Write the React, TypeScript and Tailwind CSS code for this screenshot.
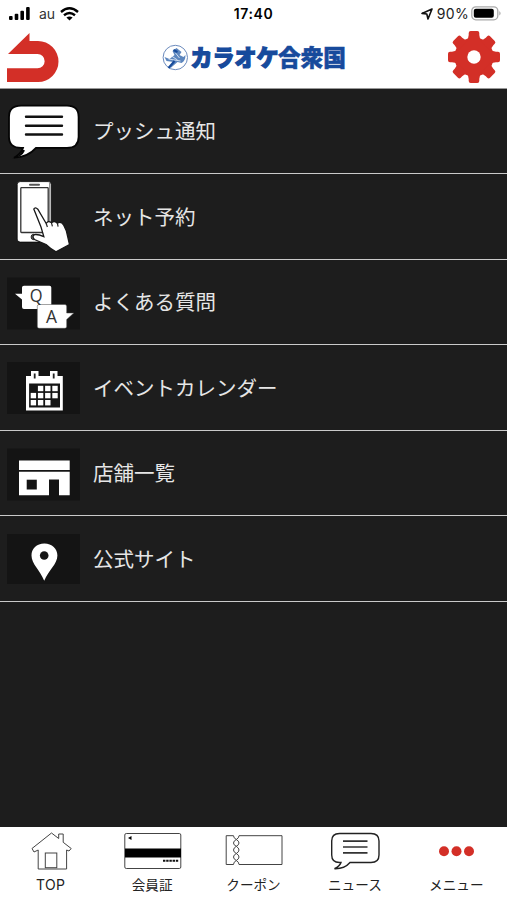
import type { ReactNode } from "react";

const jp = "font-['Liberation_Sans','Noto_Sans_CJK_JP',sans-serif]";

function BubbleIcon() {
  return (
    <>
      <path
        d="M21 105.2H67Q78.6 105.2 78.6 116.5V136.5Q78.6 147.4 67 147.4H36Q28 156.6 14 157.2Q21 153.6 23 147.4H21Q9 147.4 9 136.5V116.5Q9 105.2 21 105.2Z"
        fill="#fff" stroke="#050505" strokeWidth="1.8"
      />
      <path d="M12 158Q20 156 22.5 149L25 150Q22 157 12 158Z" fill="#050505" />
      <path d="M26 116.3H62M26 125.2H62M26 134H62" stroke="#111" strokeWidth="2.4" strokeLinecap="round" />
    </>
  );
}

function PhoneIcon() {
  return (
    <>
      <rect x="17.2" y="181.6" width="34" height="60.5" rx="3" fill="#fff" stroke="#050505" strokeWidth=".8" />
      <path d="M49.6 183V240" stroke="#777" strokeWidth=".9" />
      <rect x="20.8" y="187.7" width="27.4" height="44.8" rx=".7" fill="#fff" stroke="#333" strokeWidth="1.3" />
      <path d="M30 184.8H39" stroke="#555" strokeWidth="2" strokeLinecap="round" />
      <circle cx="33.8" cy="237" r="2.7" fill="#777" stroke="#222" />
      <path
        d="M33.8 209Q35.2 206.5 37.8 209.2L46.2 223.5Q48 220 51.5 222.8Q54.5 220 57.4 223.2Q61 221 63.5 224.8L66.4 231L69.5 244.5L56 251.8Q50 248.5 46 244.5L34.5 239.5Q31.5 236.5 34.5 234.6Q38 234 43.8 236.6L41 227Z"
        fill="#fff" stroke="#181818" strokeWidth="1.3"
      />
      <path d="M46.2 223.5L47.4 227M51.5 222.8L52.4 226.3M57.4 223.2L58.1 226.7" stroke="#222" strokeWidth="1.2" />
    </>
  );
}

function FaqIcon() {
  return (
    <>
      <rect x="7" y="277" width="73" height="52" fill="#141414" />
      <path d="M15 293.3H22V287Q22 285.3 24 285.3H49.5Q51.3 285.3 51.3 287V308.5H24Q22 308.5 22 306.5V299Z" fill="#fff" />
      <path d="M39 304H65Q66.7 304 66.7 306V312.5H73.8L66.7 319V326Q66.7 327.8 65 327.8H39Q37.3 327.8 37.3 326V306Q37.3 304 39 304Z" fill="#fff" stroke="#444" strokeWidth=".5" />
      <text x="29.8" y="301.6" textLength="12.8" lengthAdjust="spacingAndGlyphs" fontSize="19" fill="#333" className="font-['Open_Sans']">Q</text>
      <text x="46" y="322" textLength="11" lengthAdjust="spacingAndGlyphs" fontSize="19" fill="#333" className="font-['Open_Sans']">A</text>
    </>
  );
}

const DAYS = [
  [40.6, 388.5], [47.8, 388.5], [55, 388.5],
  [33.4, 395.6], [40.6, 395.6], [47.8, 395.6], [55, 395.6],
  [33.4, 402.7], [40.6, 402.7], [47.8, 402.7],
];

function CalendarIcon() {
  return (
    <>
      <rect x="7" y="362" width="73" height="52" fill="#141414" />
      <path d="M26 376H31V371H38.5V376H50V371H57.5V376H62.8V410.4H26Z" fill="#fff" />
      <path d="M29.1 383.5H60V407.5H29.1Z" fill="#151515" />
      <path d="M34.7 373.4V378.5M53.7 373.4V378.5" stroke="#222" strokeWidth="1.8" />
      {DAYS.map(([x, y]) => (
        <rect key={`${x}-${y}`} x={x - 2.7} y={y - 2.7} width="5.4" height="5.4" fill="#fff" />
      ))}
    </>
  );
}

function StoreIcon() {
  return (
    <>
      <rect x="7" y="448" width="73" height="52" fill="#141414" />
      <path d="M19 460H69.7V469.4H19Z" fill="#fff" />
      <path d="M19 471.2H69.7V494.8H59V479H49V494.8H19Z" fill="#fff" />
      <path d="M26.7 479.2H36.8V489H26.7Z" fill="#141414" />
    </>
  );
}

function PinIcon() {
  return (
    <>
      <rect x="7" y="534" width="73" height="50" fill="#141414" />
      <path d="M44.4 543.6C36.5 543.6 31.5 548.8 31.5 555.5C31.5 564 40 570 44.2 580.8C48.7 570 57.4 564 57.4 555.5C57.4 548.8 52 543.6 44.4 543.6Z" fill="#fff" />
      <circle cx="44.2" cy="555.5" r="4.3" fill="#151515" />
    </>
  );
}

const ROWS: { label: string; icon: ReactNode; view: string }[] = [
  { label: "プッシュ通知", icon: <BubbleIcon />, view: "0 88.5 84 84.5" },
  { label: "ネット予約", icon: <PhoneIcon />, view: "0 174 84 84.5" },
  { label: "よくある質問", icon: <FaqIcon />, view: "0 259.5 84 84.5" },
  { label: "イベントカレンダー", icon: <CalendarIcon />, view: "0 345 84 84.5" },
  { label: "店舗一覧", icon: <StoreIcon />, view: "0 430.5 84 84.5" },
  { label: "公式サイト", icon: <PinIcon />, view: "0 516 84 84.5" },
];

function StatusBar() {
  return (
    <div className="grid h-[27px] grid-cols-3 items-center text-[14px] text-black">
      <div className="flex items-center pl-[9px]">
        <svg width="22" height="14" viewBox="0 0 22 14" fill="#000">
          <rect x="0" y="9" width="3.6" height="4" rx="1" />
          <rect x="5.7" y="6.8" width="3.6" height="6.2" rx="1" />
          <rect x="11.4" y="3.8" width="3.6" height="9.2" rx="1" />
          <rect x="17.1" y="0" width="3.6" height="13" rx="1" />
        </svg>
        <span className="ml-2 font-['Inter'] text-[14px] leading-[27px] text-[#333]">au</span>
        <svg className="ml-[5px]" width="19" height="14" viewBox="0 0 19 14" fill="none" stroke="#000" strokeWidth="2.4">
          <path d="M1 5Q9.5 -2.4 18 5" />
          <path d="M4 8.3Q9.5 3.8 15 8.3" />
          <path d="M6.4 10.6Q9.5 8.2 12.6 10.6L9.5 13.6Z" fill="#000" stroke="none" />
        </svg>
      </div>
      <div className="text-center font-['Inter'] text-[14px] font-semibold tracking-[.6px]">17:40</div>
      <div className="flex items-center justify-end pr-[5px]">
        <svg width="12" height="12" viewBox="0 0 12 12" fill="none" stroke="#111" strokeWidth="1.6" strokeLinejoin="round">
          <path d="M11 1L1 5.4L5.8 6L7 11Z" />
        </svg>
        <span className="ml-[4px] font-['Inter'] text-[14px] tracking-[.3px] text-[#222]">90%</span>
        <svg className="ml-[2px]" width="31" height="15" viewBox="0 0 31 15">
          <rect x=".8" y=".8" width="26" height="13" rx="4" fill="#fff" stroke="#aaa" strokeWidth="1.3" />
          <rect x="2.8" y="2.8" width="20" height="9" rx="2" fill="#000" />
          <path d="M28.3 5Q31 7.3 28.3 9.6Z" fill="#aaa" />
        </svg>
      </div>
    </div>
  );
}

function Logo() {
  return (
    <svg width="190" height="34" viewBox="158.5 41 190 34">
      <circle cx="174.8" cy="58.5" r="12.2" fill="#fff" stroke="#6c8bbd" strokeWidth="1" />
      <path d="M172 52L176 49L181 53L179 56L183 58L185 56Q185 62 181 64L177 63L169 70L173 63L166 62L164 58L169 60L174 56Z" fill="#5c86be" />
      <path d="M171 57L177 61M168 60L180 62M175 54L179 59" stroke="#dce7f4" strokeWidth=".9" />
      <path d="M168 69L174 62M173 51L177 53" stroke="#174b9b" strokeWidth="2" />
      <text x="190" y="67" fontSize="23" textLength="88" lengthAdjust="spacingAndGlyphs" fontWeight="900" fill="#174a9c" stroke="#174a9c" strokeWidth="1.2" className="font-['Noto_Sans_CJK_JP',sans-serif]">カラオケ</text>
      <text x="277.5" y="67" fontSize="23" textLength="68" lengthAdjust="spacingAndGlyphs" fontWeight="900" fill="#174a9c" stroke="#174a9c" strokeWidth=".5" className="font-['Noto_Sans_CJK_JP',sans-serif]">合衆国</text>
    </svg>
  );
}

const TEETH = [0, 45, 90, 135, 180, 225, 270, 315];

function Gear() {
  return (
    <svg width="54" height="54" viewBox="-27 -27 54 54" fill="#d32f27">
      <circle r="19.5" />
      {TEETH.map((a) => (
        <path key={a} transform={`rotate(${a})`} d="M-7.5 -16Q-5.4 -19 -5.3 -22V-24Q-5.3 -26 -3.3 -26H3.3Q5.3 -26 5.3 -24V-22Q5.4 -19 7.5 -16Z" />
      ))}
      <circle r="6.7" fill="#fff" />
    </svg>
  );
}

function Header() {
  return (
    <div className="flex h-[60px] items-center justify-between pl-[6px] pr-[6px]">
      <svg width="54" height="52" viewBox="6 31 54 52">
        <path d="M29.5 33V41H38A20.5 20.5 0 0 1 38 82H7V68.3H37.5A6.8 6.8 0 0 0 37.5 54H8Z" fill="#d32f27" />
      </svg>
      <Logo />
      <Gear />
    </div>
  );
}

const TABS: { label: string; icon: ReactNode; view: string }[] = [
  {
    label: "TOP",
    view: "16 828 70 44",
    icon: (
      <>
        <path d="M38.2 869V850L34 852L32 848.5L51.5 833L58.7 838.5V834H63.2V842.3L71.2 848.5L69 851L66.6 850V869Z" />
        <rect x="45.3" y="853" width="11.5" height="14.7" />
      </>
    ),
  },
  {
    label: "会員証",
    view: "117 828 70 44",
    icon: (
      <>
        <rect x="124.8" y="833.5" width="56" height="35" rx="1.5" />
        <path d="M125 848.5H181V857.6H125Z" fill="#000" stroke="none" />
        <path d="M128 838L131.5 836V840Z" fill="#000" stroke="none" />
        <path d="M163 860.8H179" strokeWidth="2" strokeDasharray="2.4 .8" stroke="#111" />
      </>
    ),
  },
  {
    label: "クーポン",
    view: "218 828 70 44",
    icon: (
      <>
        <path d="M233.5 835.7H226.2V864.5H233.5M239 835.7H282V864.5H239" />
        <path d="M233.5 835.7Q233.5 838 236.3 839.5Q239 841 239 843Q239 845 236.3 846.3Q233.5 848 233.5 850Q233.5 852 236.3 853.5Q239 855 239 857Q239 859 236.3 860.5Q233.5 862 233.5 864.5M239 835.7Q239 838 236.3 839.5Q233.5 841 233.5 843Q233.5 845 236.3 846.3Q239 848 239 850Q239 852 236.3 853.5Q233.5 855 233.5 857Q233.5 859 236.3 860.5Q239 862 239 864.5" />
      </>
    ),
  },
  {
    label: "ニュース",
    view: "320 828 70 44",
    icon: (
      <>
        <path d="M339.5 833.5H371Q379 833.5 379 841V855Q379 862.5 371 862.5H350Q344.5 869 334.5 868.7Q340 866 341 862.5H339.5Q331.7 862.5 331.7 855V841Q331.7 833.5 339.5 833.5Z" strokeWidth="1.4" stroke="#222" />
        <path d="M343 841.2H367.5M343 847H367.5M343 852.8H367.5" strokeWidth="1.7" stroke="#333" />
      </>
    ),
  },
  {
    label: "メニュー",
    view: "421 828 70 44",
    icon: (
      <g fill="#d32f27" stroke="none">
        <circle cx="444" cy="851.3" r="5" />
        <circle cx="456.5" cy="851.3" r="5" />
        <circle cx="469" cy="851.3" r="5" />
      </g>
    ),
  },
];

export default function App() {
  return (
    <div className={`flex h-[900px] w-[507px] flex-col overflow-hidden bg-[#1d1d1d] ${jp}`}>
      <header className="h-[88.5px] shrink-0 border-b border-[#999] bg-white">
        <StatusBar />
        <Header />
      </header>
      <main className="flex-1">
        {ROWS.map((r) => (
          <div key={r.label} className="flex h-[85.5px] items-center border-b border-[#cacaca]">
            <svg width="84" height="84.5" viewBox={r.view} className="shrink-0" fill="none">
              {r.icon}
            </svg>
            <span className="ml-[9px] whitespace-nowrap pt-[3px] text-[20.5px] leading-[30px] text-[#e6e6e6]">{r.label}</span>
          </div>
        ))}
      </main>
      <nav className="grid h-[73.5px] shrink-0 grid-cols-5 bg-white">
        {TABS.map((t) => (
          <div key={t.label} className="flex flex-col items-center pt-px">
            <svg width="70" height="44" viewBox={t.view} fill="none" stroke="#444" strokeWidth="1">
              {t.icon}
            </svg>
            <span className="mt-[3px] whitespace-nowrap font-['Inter','Noto_Sans_CJK_JP',sans-serif] text-[13.6px] leading-5 text-[#222]">
              {t.label === "TOP" ? <span className="text-[14px] tracking-[.3px]">{t.label}</span> : t.label}
            </span>
          </div>
        ))}
      </nav>
    </div>
  );
}
